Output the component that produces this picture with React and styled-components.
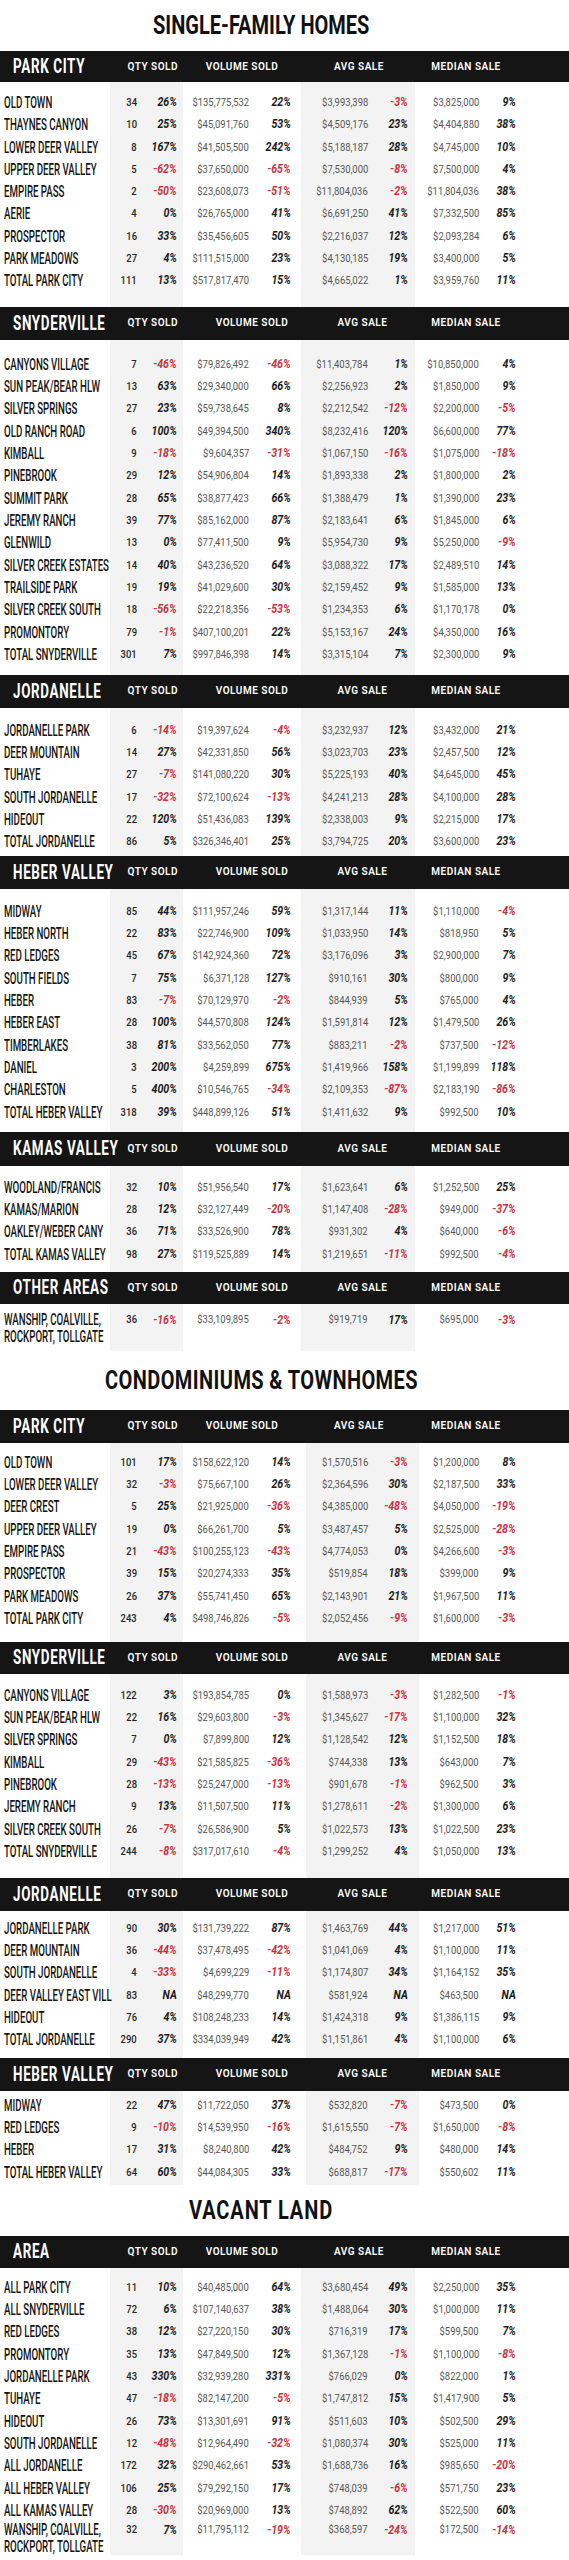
import React from "react";
import styled, { createGlobalStyle } from "styled-components";

const GlobalStyle = createGlobalStyle`
  html, body { margin: 0; padding: 0; background: #ffffff; }
  body { font-family: Roboto, "Liberation Sans", Arial, sans-serif; }
  #root { width: 569px; }
`;

const Page = styled.main`
  width: 569px;
  display: flex;
  flex-direction: column;
  overflow: hidden;
`;

const SectionTitle = styled.h1`
  margin: 0;
  height: ${(p) => p.$h}px;
  padding-right: 47px;
  box-sizing: border-box;
  display: flex;
  align-items: center;
  justify-content: center;
  font-family: Roboto, "Liberation Sans", sans-serif;
  font-weight: 700;
  font-size: 25px;
  line-height: 1;
  color: #111;
  white-space: nowrap;
  & > span {
    display: inline-block;
    letter-spacing: ${(p) => p.$ls || 0}px;
    transform: scaleX(0.8);
  }
`;

const Bar = styled.header`
  height: ${(p) => p.$h}px;
  background: #151515;
  color: #ffffff;
  display: grid;
  grid-template-columns: ${(p) =>
    p.$wide ? "118px 65px 118px 116px 98px 1fr" : "118px 65px 138px 83px 124px 1fr"};
  align-items: center;
`;

const BarName = styled.div`
  padding-left: 13px;
  white-space: nowrap;
  font-family: Roboto, "Liberation Sans", sans-serif;
  font-weight: 700;
  font-size: 21px;
  letter-spacing: 1px;
  line-height: 1;
  & > span {
    display: inline-block;
    transform: scaleX(0.64);
    transform-origin: left center;
  }
`;

const ColHead = styled.div`
  text-align: ${(p) => (p.$right ? "right" : "center")};
  padding-right: ${(p) => (p.$right ? 5 : 0)}px;
  font-family: Roboto, "Liberation Sans", sans-serif;
  font-weight: 600;
  font-size: 10px;
  letter-spacing: 0.5px;
  line-height: 1;
  white-space: nowrap;
`;

const Body = styled.div`
  padding: ${(p) => p.$pt}px 0 ${(p) => p.$pb}px;
  background: linear-gradient(
    to right,
    #ffffff 110px,
    #f3f3f3 110px,
    #f3f3f3 183px,
    #ffffff 183px,
    #ffffff ${(p) => p.$a}px,
    #f3f3f3 ${(p) => p.$a}px,
    #f3f3f3 ${(p) => p.$b}px,
    #ffffff ${(p) => p.$b}px
  );
`;

const Row = styled.div`
  --lh: ${(p) => (p.$tall ? "17px" : "22.33px")};
  display: grid;
  grid-template-columns: 110px 27px 40px 72px 42px 77px 40px 71px 37px 1fr;
  height: ${(p) => (p.$tall ? 34 : 22.33)}px;
  align-items: start;
`;

const Name = styled.div`
  padding-left: 4px;
  white-space: nowrap;
  font-family: Roboto, "Liberation Sans", sans-serif;
  font-weight: 500;
  font-size: 17px;
  line-height: var(--lh);
  color: #141414;
  & > span {
    display: inline-block;
    transform: scaleX(0.57);
    transform-origin: left center;
  }
`;

const Num = styled.div`
  text-align: right;
  white-space: nowrap;
  line-height: var(--lh);
  font-family: Roboto, "Liberation Sans", sans-serif;
  font-size: 11.5px;
  font-weight: ${(p) => (p.$strong ? 500 : 400)};
  color: ${(p) => (p.$strong ? "#262626" : "#555555")};
  & > span {
    display: inline-block;
    transform: scaleX(0.82);
    transform-origin: right center;
  }
`;

const Pct = styled.div`
  text-align: right;
  white-space: nowrap;
  line-height: var(--lh);
  font-family: Roboto, "Liberation Sans", sans-serif;
  font-style: italic;
  font-weight: 700;
  font-size: 12.5px;
  color: ${(p) => (p.$neg ? "#c9323f" : "#1c1c1c")};
  & > span {
    display: inline-block;
    transform: scaleX(0.85);
    transform-origin: right center;
  }
`;

const parse = (s) =>
  s
    .trim()
    .split("\n")
    .map((l) => l.trim().split("|"));

const SFH_PC = parse(`
OLD TOWN|34|26%|$135,775,532|22%|$3,993,398|-3%|$3,825,000|9%
THAYNES CANYON|10|25%|$45,091,760|53%|$4,509,176|23%|$4,404,880|38%
LOWER DEER VALLEY|8|167%|$41,505,500|242%|$5,188,187|28%|$4,745,000|10%
UPPER DEER VALLEY|5|-62%|$37,650,000|-65%|$7,530,000|-8%|$7,500,000|4%
EMPIRE PASS|2|-50%|$23,608,073|-51%|$11,804,036|-2%|$11,804,036|38%
AERIE|4|0%|$26,765,000|41%|$6,691,250|41%|$7,332,500|85%
PROSPECTOR|16|33%|$35,456,605|50%|$2,216,037|12%|$2,093,284|6%
PARK MEADOWS|27|4%|$111,515,000|23%|$4,130,185|19%|$3,400,000|5%
TOTAL PARK CITY|111|13%|$517,817,470|15%|$4,665,022|1%|$3,959,760|11%
`);

const SFH_SNY = parse(`
CANYONS VILLAGE|7|-46%|$79,826,492|-46%|$11,403,784|1%|$10,850,000|4%
SUN PEAK/BEAR HLW|13|63%|$29,340,000|66%|$2,256,923|2%|$1,850,000|9%
SILVER SPRINGS|27|23%|$59,738,645|8%|$2,212,542|-12%|$2,200,000|-5%
OLD RANCH ROAD|6|100%|$49,394,500|340%|$8,232,416|120%|$6,600,000|77%
KIMBALL|9|-18%|$9,604,357|-31%|$1,067,150|-16%|$1,075,000|-18%
PINEBROOK|29|12%|$54,906,804|14%|$1,893,338|2%|$1,800,000|2%
SUMMIT PARK|28|65%|$38,877,423|66%|$1,388,479|1%|$1,390,000|23%
JEREMY RANCH|39|77%|$85,162,000|87%|$2,183,641|6%|$1,845,000|6%
GLENWILD|13|0%|$77,411,500|9%|$5,954,730|9%|$5,250,000|-9%
SILVER CREEK ESTATES|14|40%|$43,236,520|64%|$3,088,322|17%|$2,489,510|14%
TRAILSIDE PARK|19|19%|$41,029,600|30%|$2,159,452|9%|$1,585,000|13%
SILVER CREEK SOUTH|18|-56%|$22,218,356|-53%|$1,234,353|6%|$1,170,178|0%
PROMONTORY|79|-1%|$407,100,201|22%|$5,153,167|24%|$4,350,000|16%
TOTAL SNYDERVILLE|301|7%|$997,846,398|14%|$3,315,104|7%|$2,300,000|9%
`);

const SFH_JOR = parse(`
JORDANELLE PARK|6|-14%|$19,397,624|-4%|$3,232,937|12%|$3,432,000|21%
DEER MOUNTAIN|14|27%|$42,331,850|56%|$3,023,703|23%|$2,457,500|12%
TUHAYE|27|-7%|$141,080,220|30%|$5,225,193|40%|$4,645,000|45%
SOUTH JORDANELLE|17|-32%|$72,100,624|-13%|$4,241,213|28%|$4,100,000|28%
HIDEOUT|22|120%|$51,436,083|139%|$2,338,003|9%|$2,215,000|17%
TOTAL JORDANELLE|86|5%|$326,346,401|25%|$3,794,725|20%|$3,600,000|23%
`);

const SFH_HEB = parse(`
MIDWAY|85|44%|$111,957,246|59%|$1,317,144|11%|$1,110,000|-4%
HEBER NORTH|22|83%|$22,746,900|109%|$1,033,950|14%|$818,950|5%
RED LEDGES|45|67%|$142,924,360|72%|$3,176,096|3%|$2,900,000|7%
SOUTH FIELDS|7|75%|$6,371,128|127%|$910,161|30%|$800,000|9%
HEBER|83|-7%|$70,129,970|-2%|$844,939|5%|$765,000|4%
HEBER EAST|28|100%|$44,570,808|124%|$1,591,814|12%|$1,479,500|26%
TIMBERLAKES|38|81%|$33,562,050|77%|$883,211|-2%|$737,500|-12%
DANIEL|3|200%|$4,259,899|675%|$1,419,966|158%|$1,199,899|118%
CHARLESTON|5|400%|$10,546,765|-34%|$2,109,353|-87%|$2,183,190|-86%
TOTAL HEBER VALLEY|318|39%|$448,899,126|51%|$1,411,632|9%|$992,500|10%
`);

const SFH_KAM = parse(`
WOODLAND/FRANCIS|32|10%|$51,956,540|17%|$1,623,641|6%|$1,252,500|25%
KAMAS/MARION|28|12%|$32,127,449|-20%|$1,147,408|-28%|$949,000|-37%
OAKLEY/WEBER CANY|36|71%|$33,526,900|78%|$931,302|4%|$640,000|-6%
TOTAL KAMAS VALLEY|98|27%|$119,525,889|14%|$1,219,651|-11%|$992,500|-4%
`);

const SFH_OTH = parse(`
WANSHIP, COALVILLE,^ROCKPORT, TOLLGATE|36|-16%|$33,109,895|-2%|$919,719|17%|$695,000|-3%
`);

const CON_PC = parse(`
OLD TOWN|101|17%|$158,622,120|14%|$1,570,516|-3%|$1,200,000|8%
LOWER DEER VALLEY|32|-3%|$75,667,100|26%|$2,364,596|30%|$2,187,500|33%
DEER CREST|5|25%|$21,925,000|-36%|$4,385,000|-48%|$4,050,000|-19%
UPPER DEER VALLEY|19|0%|$66,261,700|5%|$3,487,457|5%|$2,525,000|-28%
EMPIRE PASS|21|-43%|$100,255,123|-43%|$4,774,053|0%|$4,266,600|-3%
PROSPECTOR|39|15%|$20,274,333|35%|$519,854|18%|$399,000|9%
PARK MEADOWS|26|37%|$55,741,450|65%|$2,143,901|21%|$1,967,500|11%
TOTAL PARK CITY|243|4%|$498,746,826|-5%|$2,052,456|-9%|$1,600,000|-3%
`);

const CON_SNY = parse(`
CANYONS VILLAGE|122|3%|$193,854,785|0%|$1,588,973|-3%|$1,282,500|-1%
SUN PEAK/BEAR HLW|22|16%|$29,603,800|-3%|$1,345,627|-17%|$1,100,000|32%
SILVER SPRINGS|7|0%|$7,899,800|12%|$1,128,542|12%|$1,152,500|18%
KIMBALL|29|-43%|$21,585,825|-36%|$744,338|13%|$643,000|7%
PINEBROOK|28|-13%|$25,247,000|-13%|$901,678|-1%|$962,500|3%
JEREMY RANCH|9|13%|$11,507,500|11%|$1,278,611|-2%|$1,300,000|6%
SILVER CREEK SOUTH|26|-7%|$26,586,900|5%|$1,022,573|13%|$1,022,500|23%
TOTAL SNYDERVILLE|244|-8%|$317,017,610|-4%|$1,299,252|4%|$1,050,000|13%
`);

const CON_JOR = parse(`
JORDANELLE PARK|90|30%|$131,739,222|87%|$1,463,769|44%|$1,217,000|51%
DEER MOUNTAIN|36|-44%|$37,478,495|-42%|$1,041,069|4%|$1,100,000|11%
SOUTH JORDANELLE|4|-33%|$4,699,229|-11%|$1,174,807|34%|$1,164,152|35%
DEER VALLEY EAST VILL|83|NA|$48,299,770|NA|$581,924|NA|$463,500|NA
HIDEOUT|76|4%|$108,248,233|14%|$1,424,318|9%|$1,386,115|9%
TOTAL JORDANELLE|290|37%|$334,039,949|42%|$1,151,861|4%|$1,100,000|6%
`);

const CON_HEB = parse(`
MIDWAY|22|47%|$11,722,050|37%|$532,820|-7%|$473,500|0%
RED LEDGES|9|-10%|$14,539,950|-16%|$1,615,550|-7%|$1,650,000|-8%
HEBER|17|31%|$8,240,800|42%|$484,752|9%|$480,000|14%
TOTAL HEBER VALLEY|64|60%|$44,084,305|33%|$688,817|-17%|$550,602|11%
`);

const LAND = parse(`
ALL PARK CITY|11|10%|$40,485,000|64%|$3,680,454|49%|$2,250,000|35%
ALL SNYDERVILLE|72|6%|$107,140,637|38%|$1,488,064|30%|$1,000,000|11%
RED LEDGES|38|12%|$27,220,150|30%|$716,319|17%|$599,500|7%
PROMONTORY|35|13%|$47,849,500|12%|$1,367,128|-1%|$1,100,000|-8%
JORDANELLE PARK|43|330%|$32,939,280|331%|$766,029|0%|$822,000|1%
TUHAYE|47|-18%|$82,147,200|-5%|$1,747,812|15%|$1,417,900|5%
HIDEOUT|26|73%|$13,301,691|91%|$511,603|10%|$502,500|29%
SOUTH JORDANELLE|12|-48%|$12,964,490|-32%|$1,080,374|30%|$525,000|11%
ALL JORDANELLE|172|32%|$290,462,661|53%|$1,688,736|16%|$985,650|-20%
ALL HEBER VALLEY|106|25%|$79,292,150|17%|$748,039|-6%|$571,750|23%
ALL KAMAS VALLEY|28|-30%|$20,969,000|13%|$748,892|62%|$522,500|60%
WANSHIP, COALVILLE,^ROCKPORT, TOLLGATE|32|7%|$11,795,112|-19%|$368,597|-24%|$172,500|-14%
`);

function Percent({ value }) {
  return (
    <Pct $neg={value.startsWith("-")}>
      <span>{value}</span>
    </Pct>
  );
}

function DataRow({ cells }) {
  const [name, qty, qtyP, vol, volP, avg, avgP, med, medP] = cells;
  const lines = name.split("^");
  const tall = lines.length > 1;
  return (
    <Row $tall={tall}>
      <Name>
        <span>
          {lines.map((l, i) => (
            <React.Fragment key={i}>
              {i > 0 && <br />}
              {l}
            </React.Fragment>
          ))}
        </span>
      </Name>
      <Num $strong>
        <span>{qty}</span>
      </Num>
      <Percent value={qtyP} />
      <Num>
        <span>{vol}</span>
      </Num>
      <Percent value={volP} />
      <Num>
        <span>{avg}</span>
      </Num>
      <Percent value={avgP} />
      <Num>
        <span>{med}</span>
      </Num>
      <Percent value={medP} />
    </Row>
  );
}

function Table({ name, wide, barH, pt, pb, shade = [301, 415], rows }) {
  return (
    <section>
      <Bar $h={barH} $wide={wide}>
        <BarName>
          <span>{name}</span>
        </BarName>
        <ColHead $right>QTY SOLD</ColHead>
        <ColHead>VOLUME SOLD</ColHead>
        <ColHead>AVG SALE</ColHead>
        <ColHead>MEDIAN SALE</ColHead>
      </Bar>
      <Body $pt={pt} $pb={pb} $a={shade[0]} $b={shade[1]}>
        {rows.map((r, i) => (
          <DataRow key={i} cells={r} />
        ))}
      </Body>
    </section>
  );
}

const CONDO_SHADE = [306, 419];

export default function App() {
  return (
    <>
      <GlobalStyle />
      <Page>
        <SectionTitle $h={51}>
          <span>SINGLE-FAMILY HOMES</span>
        </SectionTitle>
        <Table name="PARK CITY" wide barH={31} pt={8.85} pb={15.15} rows={SFH_PC} />
        <Table name="SNYDERVILLE" barH={33} pt={12.85} pb={9.5} rows={SFH_SNY} />
        <Table name="JORDANELLE" barH={33} pt={10.85} pb={3.2} rows={SFH_JOR} />
        <Table name="HEBER VALLEY" barH={33} pt={10.85} pb={8.85} rows={SFH_HEB} />
        <Table name="KAMAS VALLEY" barH={34} pt={9.85} pb={6.83} rows={SFH_KAM} />
        <Table name="OTHER AREAS" barH={32} pt={7.5} pb={5.5} rows={SFH_OTH} />

        <SectionTitle $h={59} $ls={0.5}>
          <span>CONDOMINIUMS &amp; TOWNHOMES</span>
        </SectionTitle>
        <Table name="PARK CITY" wide barH={33} pt={7.85} pb={12.5} shade={CONDO_SHADE} rows={CON_PC} />
        <Table name="SNYDERVILLE" barH={32} pt={9.85} pb={15.5} shade={CONDO_SHADE} rows={CON_SNY} />
        <Table name="JORDANELLE" barH={33} pt={5.85} pb={7.17} shade={CONDO_SHADE} rows={CON_JOR} />
        <Table name="HEBER VALLEY" barH={33} pt={2.85} pb={1.83} shade={CONDO_SHADE} rows={CON_HEB} />

        <SectionTitle $h={51} $ls={1.1}>
          <span>VACANT LAND</span>
        </SectionTitle>
        <Table name="AREA" wide barH={32} pt={7.85} pb={0} rows={LAND} />
      </Page>
    </>
  );
}
